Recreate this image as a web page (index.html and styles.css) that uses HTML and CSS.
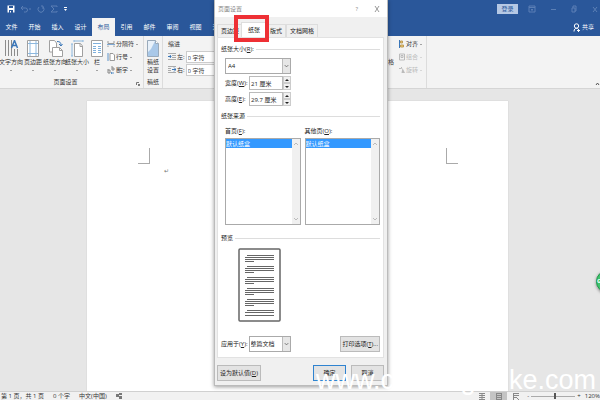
FILE: index.html
```html
<!doctype html>
<html lang="zh-CN">
  <head>
    <meta charset="UTF-8" />
    <meta name="viewport" content="width=device-width, initial-scale=1.0" />
    <title>页面设置</title>
    <link rel="stylesheet" href="styles.css" />
  </head>
  <body>
    <div class="app">
      <header class="titlebar">
        <div class="quick">
          <button aria-label="保存">
            <svg width="8" height="8" viewBox="0 0 8 8"><path d="M.5.5h7v7h-7z" fill="#fff" /><path d="M2 1h4v2H2zM2 5h4v3H2z" fill="#2a579a" /><path d="M3 6h1v1.500H3z" fill="#fff" /></svg>
          </button>
          <button class="dim" aria-label="撤消">
            <svg width="12" height="8" viewBox="0 0 12 8"><path d="M3 1L1 3l2 2M1 3h4.500a2 2 0 0 1 0 4H4M9 4h2" /></svg>
          </button>
          <button class="dim" aria-label="重复">
            <svg width="8" height="8" viewBox="0 0 8 8"><path d="M2 2a3 3 0 1 0 4 0M6 4V1H4" /></svg>
          </button>
          <button class="dim" aria-label="求和">
            <svg width="8" height="8" viewBox="0 0 8 8"><path d="M7 2V1H1l3 3-3 3h6V6" /></svg>
          </button>
          <button aria-label="自定义">
            <svg width="5" height="8" viewBox="0 0 5 8"><path d="M1 2h3v1H1zM1 4h3L2.500 6z" fill="#fff" /></svg>
          </button>
        </div>
        <div class="window-tools">
          <button class="login">登录</button>
          <button class="dim" aria-label="功能区选项">
            <svg width="8" height="8" viewBox="0 0 8 8"><path d="M1 1h6v6H1zM1 2.500h6M4 6V4M3 5l1-1 1 1" /></svg>
          </button>
          <button class="dim" aria-label="最小化">
            <svg width="8" height="8" viewBox="0 0 8 8"><path d="M2 4.500h5" /></svg>
          </button>
          <button class="dim" aria-label="还原">
            <svg width="8" height="8" viewBox="0 0 8 8"><path d="M2 3h3v4H2zM3 3V1h3v5H5" /></svg>
          </button>
          <button class="dim" aria-label="关闭">
            <svg width="8" height="8" viewBox="0 0 8 8"><path d="M2 2l4 5M6 2L2 7" /></svg>
          </button>
        </div>
      </header>

      <nav class="tabs">
        <a href="#">文件</a>
        <a href="#">开始</a>
        <a href="#">插入</a>
        <a href="#">设计</a>
        <a href="#" class="active">布局</a>
        <a href="#">引用</a>
        <a href="#">邮件</a>
        <a href="#">审阅</a>
        <a href="#">视图</a>
        <a href="#">开发</a>
        <button class="share">
          <svg width="7" height="9" viewBox="0 0 7 9"><circle cx="3.500" cy="3" r="2.200" /><path d="M1 8.500C1 6 2.500 5.300 3.500 5.300S5 5.500 5.500 6.500M4 7.500h3M5.500 6v3" /></svg>
          共享
        </button>
      </nav>

      <div class="ribbon">
        <section class="group setup">
          <div class="group-body">
            <button class="big">
              <svg width="15" height="17" viewBox="0 0 15 17"><path d="M1.500 0v16M4.500 0v16M7.500 0v16M10.500 9v7M13.500 9v7" stroke="#8c8c8c" /><path d="M7.500 8L10.500.500 13.500 8M8.500 5.500h4" stroke="#3a76b8" stroke-width="1.500" /></svg>
              文字方向<i class="caret"></i>
            </button>
            <button class="big">
              <svg width="12" height="17" viewBox="0 0 12 17"><path d="M.500.500h11v16H.500z" fill="#fff" stroke="#a0a0a0" /><path d="M3 1v15M9 1v15M1 3.500h10M1 13.500h10" stroke="#8db8de" /></svg>
              页边距<i class="caret"></i>
            </button>
            <button class="big">
              <svg width="15" height="17" viewBox="0 0 15 17"><path d="M1.500.500h5l2 2.500v9h-7z" fill="#fff" stroke="#a0a0a0" /><path d="M4.500 7.500h7l3 3v6h-10z" fill="#fff" stroke="#a0a0a0" /><path d="M11.500 7.500v3h3" stroke="#a0a0a0" /><path d="M9 1.500c3 0 4 1 4 4M11 4l2 2 1.500-2" stroke="#3a76b8" /></svg>
              纸张方向<i class="caret"></i>
            </button>
            <button class="big">
              <svg width="13" height="17" viewBox="0 0 13 17"><path d="M3.500 3.500h6l2 2.500v10.500h-8z" fill="#fff" stroke="#a0a0a0" /><path d="M9 4v2.500h3" stroke="#a0a0a0" /><path d="M3 1h9M3 0v2M12 0v2M1 4v12M0 4h2M0 16h2" stroke="#8db8de" /></svg>
              纸张大小<i class="caret"></i>
            </button>
            <button class="big narrow">
              <svg width="12" height="17" viewBox="0 0 12 17"><path d="M.500.500h11v16H.500z" fill="#fff" stroke="#a0a0a0" /><path d="M2 3.500h8M2 6.500h3M7 6.500h3M2 8.500h3M7 8.500h3M2 10.500h3M7 10.500h3M2 12.500h3M7 12.500h3" stroke="#7fb0dc" /></svg>
              栏<i class="caret"></i>
            </button>
            <div class="small-list">
              <button class="small">
                <svg width="8" height="8" viewBox="0 0 8 8"><path d="M1 1v2.500h6V1M1 7V5.500M7 7V5.500" stroke="#999" /><path d="M0 4.500h8" stroke="#7fa9d4" /></svg>
                分隔符<i class="caret"></i>
              </button>
              <button class="small">
                <svg width="8" height="8" viewBox="0 0 8 8"><path d="M1 0v8" stroke="#5f94c9" /><path d="M3 .500h3L7.500 2v5.500H3z" fill="#fff" stroke="#999" /></svg>
                行号<i class="caret"></i>
              </button>
              <button class="small">
                <svg width="8" height="8" viewBox="0 0 8 8"><path d="M1 3v4h2V4H1M5 0v4h2V2H5" stroke="#888" /><path d="M4 7h3M5 6L4 7l1 1" stroke="#5f94c9" /></svg>
                断字<i class="caret"></i>
              </button>
            </div>
          </div>
          <h2>页面设置</h2>
          <svg class="launcher" width="4" height="4" viewBox="0 0 4 4"><path d="M.500 3V.500H3M2 2l1.500 1.500M3.500 2v1.500H2" /></svg>
        </section>

        <section class="group paper">
          <div class="group-body">
            <button class="big">
              <svg width="12" height="17" viewBox="0 0 12 17"><path d="M.500.500h8l3 3v13H.500z" fill="#a9c8e8" stroke="#9ab" /><path d="M1 1h7l-4 8-3 3z" fill="#e8f1fa" /><path d="M8.500.500v3h3" fill="#fff" stroke="#9ab" /></svg>
              稿纸<br />设置
            </button>
          </div>
          <h2>稿纸</h2>
        </section>

        <section class="group indent">
          <h3>缩进</h3>
          <div class="field">
            <svg width="8" height="7" viewBox="0 0 8 7"><path d="M0 .500h8M4 2.500h4M4 4.500h4M0 6.500h8" stroke="#aaa" /><path d="M0 3.500h3M2 2l1 1.500L2 5" stroke="#3a76b8" /></svg>
            <label for="indent-left">左:</label>
            <input id="indent-left" type="text" value="0 字符" />
          </div>
          <div class="field">
            <svg width="8" height="7" viewBox="0 0 8 7"><path d="M0 .500h8M0 2.500h3M0 4.500h3M0 6.500h8" stroke="#aaa" /><path d="M4 3.500h4M6 1.500l2 2-2 2" stroke="#3a76b8" /></svg>
            <label for="indent-right">右:</label>
            <input id="indent-right" type="text" value="0 字符" />
          </div>
        </section>

        <section class="group arrange">
          <button class="pane">窗格</button>
          <div class="small-list">
            <button class="small">
              <svg width="6" height="8" viewBox="0 0 6 8"><path d="M.500 0v8" stroke="#3a76b8" /><path d="M1.500 1h2v2h-2zM1.500 5h3v2h-3z" fill="#f4c76a" stroke="#b99a55" /></svg>
              对齐<i class="caret"></i>
            </button>
            <button class="small" disabled>
              <svg width="6" height="8" viewBox="0 0 6 8"><path d="M.500 1h5v6h-5zM2 2.500h2v2H2z" stroke="#bbb" /></svg>
              组合<i class="caret"></i>
            </button>
            <button class="small" disabled>
              <svg width="6" height="8" viewBox="0 0 6 8"><path d="M0 2.500h2.500V1" stroke="#bbb" /><path d="M2.500 7l1-5L6 7z" fill="#bbb" /></svg>
              旋转<i class="caret"></i>
            </button>
          </div>
        </section>
        <button class="collapse" aria-label="折叠功能区">
          <svg width="5" height="4" viewBox="0 0 5 4"><path d="M1 3l1.500-2L4 3" /></svg>
        </button>
      </div>

      <main class="workspace">
        <div class="page">
          <div class="corners"><i class="corner left"></i><i class="corner right"></i></div>
          <p class="mark">↵</p>
        </div>
      </main>

      <footer class="statusbar">
        <span>第 1 页，共 1 页</span>
        <span>0 个字</span>
        <span>中文(中国)</span>
        <svg width="7" height="7" viewBox="0 0 7 7"><path d="M0 1h3v3H0zM3 0h3v2H3zM3 3h3v3H3z" fill="#777" /></svg>
        <div class="views">
          <button aria-label="阅读视图"><svg width="6" height="7" viewBox="0 0 6 7"><path d="M0 .500h6M0 2.500h6M0 4.500h6M0 6.500h6M3 0v7" /></svg></button>
          <button class="on" aria-label="页面视图"><svg width="6" height="7" viewBox="0 0 6 7"><path d="M0 .500h6M0 2.500h6M0 4.500h6M0 6.500h6M.500 0v7M5.500 0v7" /></svg></button>
          <button aria-label="Web 版式视图"><svg width="6" height="7" viewBox="0 0 6 7"><path d="M0 .500h6M0 2.500h6M0 4.500h3M.500 0v7M3 4l3 3" /></svg></button>
        </div>
        <div class="zoom">
          <button aria-label="缩小">-</button>
          <input type="range" min="0" max="100" value="54" aria-label="缩放" />
          <button aria-label="放大">+</button>
          <output>120%</output>
        </div>
      </footer>

      <form class="dialog">
        <div class="dialog-title">
          <span>页面设置</span>
          <button type="button" aria-label="帮助">?</button>
          <button type="button" aria-label="关闭"><svg width="6" height="6" viewBox="0 0 6 6"><path d="M1 0l4 6M5 0L1 6" /></svg></button>
        </div>
        <div class="dialog-tabs">
          <button type="button">页边距</button>
          <button type="button" class="active">纸张</button>
          <button type="button">版式</button>
          <button type="button">文档网格</button>
        </div>
        <div class="highlight"></div>

        <div class="panel">
          <div class="legend"><label for="paper-size">纸张大小(<u>R</u>):</label></div>
          <div class="size">
            <div class="combo">
              <select id="paper-size"><option>A4</option></select>
              <svg class="arrow" viewBox="0 0 8 8"><path d="M2 3l2 2 2-2" /></svg>
            </div>
            <div class="measure">
              <label for="paper-width">宽度(<u>W</u>):</label>
              <input id="paper-width" type="text" value="21 厘米" />
              <div class="spinner"><button type="button" aria-label="增加宽度"></button><button type="button" class="down" aria-label="减少宽度"></button></div>
            </div>
            <div class="measure">
              <label for="paper-height">高度(<u>E</u>):</label>
              <input id="paper-height" type="text" value="29.7 厘米" />
              <div class="spinner"><button type="button" aria-label="增加高度"></button><button type="button" class="down" aria-label="减少高度"></button></div>
            </div>
          </div>

          <div class="legend">纸张来源</div>
          <div class="sources">
            <div class="source">
              <label for="first-page">首页(<u>F</u>):</label>
              <div class="listbox">
                <select id="first-page" size="2"><option selected>默认纸盒</option></select>
                <div class="scroll">
                  <svg viewBox="0 0 8 8"><path d="M2 5l2-2 2 2" /></svg>
                  <svg viewBox="0 0 8 8"><path d="M2 3l2 2 2-2" /></svg>
                </div>
              </div>
            </div>
            <div class="source">
              <label for="other-pages">其他页(<u>O</u>):</label>
              <div class="listbox">
                <select id="other-pages" size="2"><option selected>默认纸盒</option></select>
                <div class="scroll">
                  <svg viewBox="0 0 8 8"><path d="M2 5l2-2 2 2" /></svg>
                  <svg viewBox="0 0 8 8"><path d="M2 3l2 2 2-2" /></svg>
                </div>
              </div>
            </div>
          </div>

          <div class="legend">预览</div>
          <svg class="preview" width="43" height="74" viewBox="0 0 43 74">
            <rect x="1" y="1" width="41" height="72" rx="1" fill="#fff" stroke="#666" stroke-width="1.500" />
            <path d="M9 7.500h27M7 9.500h29M7 11.500h29M7 13.500h9M9 18.500h27M7 20.500h29M7 22.500h29M7 24.500h9M9 29.500h27M7 31.500h29M7 33.500h29M7 35.500h9M9 40.500h27M7 42.500h29M7 44.500h29M7 46.500h9M9 51.500h27M7 53.500h29M7 55.500h29M7 57.500h9M9 62.500h27M7 64.500h29M7 67.500h29" stroke="#666" />
          </svg>

          <div class="apply">
            <label for="apply-to">应用于(<u>Y</u>):</label>
            <div class="combo">
              <select id="apply-to"><option>整篇文档</option></select>
              <svg class="arrow" viewBox="0 0 8 8"><path d="M2 3l2 2 2-2" /></svg>
            </div>
            <button type="button" class="btn">打印选项(<u>T</u>)...</button>
          </div>
        </div>

        <div class="actions">
          <button type="button" class="btn default">设为默认值(<u>D</u>)</button>
          <button type="button" class="btn ok">确定</button>
          <button type="button" class="btn cancel">取消</button>
        </div>
      </form>

      <div class="watermark"><span>www.c</span><span class="mid">g</span><span>ike.com</span></div>
      <div class="bubble">G</div>
    </div>
  </body>
</html>
```

FILE: styles.css
```css
* {
  box-sizing: border-box;
}
body {
  margin: 0;
  color: #333;
  font: 6px/8px "Open Sans", "Noto Sans CJK SC", sans-serif;
}
button,
input,
select {
  margin: 0;
  padding: 0;
  border: none;
  border-radius: 0;
  background: none;
  color: inherit;
  font: inherit;
}
button {
  white-space: nowrap;
}
svg {
  display: block;
  flex: none;
  fill: none;
}
h2,
h3,
p {
  margin: 0;
  font: inherit;
}
.app {
  position: relative;
  display: flex;
  flex-direction: column;
  height: 100vh;
  overflow: hidden;
}

/* Title bar and tabs */
.titlebar,
.tabs {
  display: flex;
  height: 18px;
  background: #2a579a;
  color: #fff;
}
.titlebar {
  align-items: center;
  justify-content: space-between;
  padding: 0 1px 0 7px;
}
.quick,
.window-tools {
  display: flex;
  align-items: center;
}
.quick {
  gap: 5px;
}
.window-tools {
  gap: 13px;
}
.dim svg {
  stroke: #5b7fb5;
}
.login {
  width: 21px;
  height: 10px;
  margin-right: -3px;
  background: #b5c8e4;
  color: #2a579a;
  line-height: 10px;
}
.tabs a {
  width: 23px;
  color: #fff;
  line-height: 18px;
  text-align: center;
  text-decoration: none;
}
.tabs .active {
  background: #f3f3f3;
  color: #2a579a;
}
.share {
  display: flex;
  align-items: center;
  gap: 2px;
  margin-left: auto;
  padding-right: 6px;
}
.share svg {
  stroke: #fff;
}

/* Ribbon */
.ribbon {
  display: flex;
  height: 53px;
  border-bottom: 1px solid #d5d5d5;
  background: #f3f3f3;
}
.group {
  position: relative;
  display: flex;
  flex: none;
  flex-direction: column;
  justify-content: space-between;
  padding: 4px 0 2px;
  border-right: 1px solid #dcdcdc;
}
.group-body {
  display: flex;
}
.group h2 {
  text-align: center;
}
.setup {
  width: 144px;
}
.setup h2 {
  padding-right: 12px;
}
.big {
  display: flex;
  flex-direction: column;
  align-items: center;
  width: 22px;
}
.big svg {
  margin-bottom: 1px;
}
.narrow {
  width: 18px;
}
.paper .big {
  width: 18px;
}
.caret {
  border: 1px solid transparent;
  border-top-color: #555;
  border-bottom: none;
}
.big .caret {
  margin-top: 4px;
}
.small-list {
  display: flex;
  flex-direction: column;
  gap: 5px;
  padding-left: 1px;
}
.small {
  display: flex;
  align-items: center;
  gap: 1px;
}
.small .caret {
  margin-left: 1px;
}
.small:disabled {
  color: #bbb;
}
.small:disabled .caret {
  border-top-color: #bbb;
}
.launcher {
  position: absolute;
  right: 3px;
  bottom: 2px;
  stroke: #777;
}
.indent {
  justify-content: flex-start;
  width: 211px;
  padding-left: 5px;
}
.field {
  display: flex;
  align-items: center;
  gap: 1px;
}
.field input {
  width: 44px;
  height: 12px;
  margin-top: 1px;
  padding-left: 1px;
  border: 1px solid #ccc;
  background: #fff;
}
.indent h3 {
  margin-bottom: 2px;
}
.arrange {
  flex-direction: row;
  justify-content: flex-end;
  width: 53px;
  padding-right: 4px;
}
.pane {
  align-self: flex-start;
  padding: 18px 4px 0 0;
}
.collapse {
  margin-left: auto;
  align-self: flex-end;
  padding-bottom: 2px;
}
.collapse svg {
  stroke: #555;
}

/* Document */
.workspace {
  display: flex;
  flex: 1;
  padding: 12px 92px 0 87px;
  background: #e6e6e6;
}
.page {
  flex: 1;
  padding: 47px 50px 0 51px;
  background: #fff;
  box-shadow: 0 0 1px #bbb;
}
.corners {
  display: flex;
  justify-content: space-between;
}
.corner {
  width: 12px;
  height: 16px;
  border-bottom: 1px solid #aaa;
}
.corner.left {
  border-right: 1px solid #aaa;
}
.corner.right {
  border-left: 1px solid #aaa;
}
.mark {
  padding: 3px 0 0 26px;
  color: #777;
}

/* Status bar */
.statusbar {
  display: flex;
  align-items: center;
  gap: 9px;
  height: 9px;
  padding-left: 1px;
  border-top: 1px solid #d0d0d0;
  background: #f1f1f1;
}
.views,
.zoom {
  display: flex;
  align-items: center;
}
.views {
  margin-left: auto;
}
.views button {
  display: grid;
  place-items: center;
  width: 17px;
  height: 8px;
}
.views .on {
  background: #c4c4c4;
}
.views svg {
  stroke: #888;
}
.zoom {
  gap: 2px;
  margin-left: -6px;
}
.zoom input {
  width: 44px;
  height: 8px;
  appearance: none;
  background: linear-gradient(#aaa, #aaa) center / 100% 1px no-repeat;
}
.zoom input::-webkit-slider-thumb {
  appearance: none;
  width: 2px;
  height: 6px;
  background: #555;
}
.zoom output {
  margin-left: 2px;
}

/* Page setup dialog */
.dialog {
  position: absolute;
  top: 0;
  left: 214px;
  width: 174px;
  padding: 0 3px 4px 2px;
  border: 1px solid #bbb;
  border-top: none;
  background: #f0f0f0;
  color: #222;
  box-shadow: 0 1px 4px rgba(0, 0, 0, 0.4);
}
.dialog u {
  text-decoration-thickness: 1px;
  text-underline-offset: 1px;
}
.dialog-title {
  display: flex;
  align-items: center;
  gap: 16px;
  height: 17px;
  margin: 0 -3px 0 -2px;
  padding: 0 7px 0 3px;
  background: #fff;
  color: #888;
}
.dialog-title span {
  flex: 1;
}
.dialog-title svg {
  stroke: #999;
}
.dialog-tabs {
  display: flex;
  align-items: flex-end;
  height: 20px;
}
.dialog-tabs button {
  height: 13px;
  padding: 0 3px;
  border: 1px solid #ddd;
  border-bottom: none;
}
.dialog-tabs .active {
  height: 15px;
  margin: 0 -1px 0 -2px;
  padding: 0 6px;
  background: #fff;
}
.highlight {
  position: absolute;
  top: 15px;
  left: 19px;
  width: 35px;
  height: 27px;
  border: 4px solid #ee3035;
}
.panel {
  padding: 7px 3px 5px;
  border: 1px solid #e2e2e2;
  background: #fff;
}
.legend {
  display: flex;
  align-items: center;
  gap: 2px;
}
.legend::after {
  content: "";
  flex: 1;
  border-top: 1px solid #ddd;
}
.size {
  display: flex;
  flex-direction: column;
  gap: 2px;
  width: 70px;
  padding: 5px 0 6px 4px;
}
.combo {
  display: flex;
  height: 16px;
  border: 1px solid #aaa;
  background: #fff;
}
.combo select {
  flex: 1;
  min-width: 0;
  padding-left: 2px;
  appearance: none;
}
.arrow {
  width: 8px;
  height: 100%;
  border-left: 1px solid #bbb;
  background: #e6e6e6;
  stroke: #666;
}
.measure {
  display: flex;
  align-items: center;
  height: 14px;
}
.measure label {
  flex: 1;
  white-space: nowrap;
}
.measure input {
  width: 34px;
  height: 14px;
  padding-left: 1px;
  border: 1px solid #bbb;
}
.spinner {
  display: flex;
  flex-direction: column;
  width: 8px;
  height: 14px;
}
.spinner button {
  display: grid;
  flex: 1;
  place-items: center;
  border: 1px solid #ccc;
  background: #f0f0f0;
}
.spinner button::before {
  content: "";
  border: 2px solid transparent;
  border-top: none;
  border-bottom-color: #222;
}
.spinner .down::before {
  border-top: 2px solid #222;
  border-bottom: none;
}
.sources {
  display: flex;
  gap: 4px;
  padding: 7px 0 9px 4px;
}
.source {
  flex: 1;
}
.source label {
  display: block;
}
.listbox {
  display: flex;
  height: 87px;
  margin-top: 3px;
  border: 1px solid #aaa;
}
.listbox select {
  flex: 1;
  min-width: 0;
  height: 85px;
  overflow: hidden;
  outline: none;
}
.listbox option {
  min-height: 0;
  padding: 0;
  line-height: 9px;
}
.listbox option:checked {
  background: #3399ff linear-gradient(#3399ff, #3399ff);
  color: #fff;
}
.scroll {
  display: flex;
  flex-direction: column;
  justify-content: space-between;
  width: 8px;
  padding: 1px 0;
  background: #f0f0f0;
}
.scroll svg {
  height: 8px;
  stroke: #bbb;
}
.preview {
  margin: 6px 0 14px 17px;
}
.apply {
  display: flex;
  align-items: center;
  justify-content: space-between;
}
.apply .combo {
  width: 42px;
  margin-right: auto;
  margin-left: 1px;
}
.apply .combo select {
  padding-left: 1px;
}
.btn {
  height: 16px;
  padding: 0 2px;
  border: 1px solid #bbb;
  background: #e3e3e3;
}
.apply .btn {
  padding: 0 1px;
}
.actions {
  display: flex;
  gap: 5px;
  padding-top: 7px;
}
.default {
  margin-right: auto;
}
.ok,
.cancel {
  width: 33px;
}
.ok {
  border: 1px solid #2f83d0;
}

/* Overlays */
.watermark {
  position: absolute;
  right: 4px;
  bottom: 5px;
  left: 316px;
  display: flex;
  justify-content: space-between;
  color: #fff;
  font: 27px/30px "Liberation Sans", sans-serif;
  pointer-events: none;
}
.mid {
  padding-left: 39px;
}
.bubble {
  position: absolute;
  top: 270px;
  right: -19px;
  width: 23px;
  height: 23px;
  border: 1px solid #249a4c;
  border-radius: 50%;
  background: #3fc46d;
  box-shadow: 0 1px 3px rgba(0, 0, 0, 0.4);
  color: #fff;
  font-weight: bold;
  line-height: 21px;
}
```
